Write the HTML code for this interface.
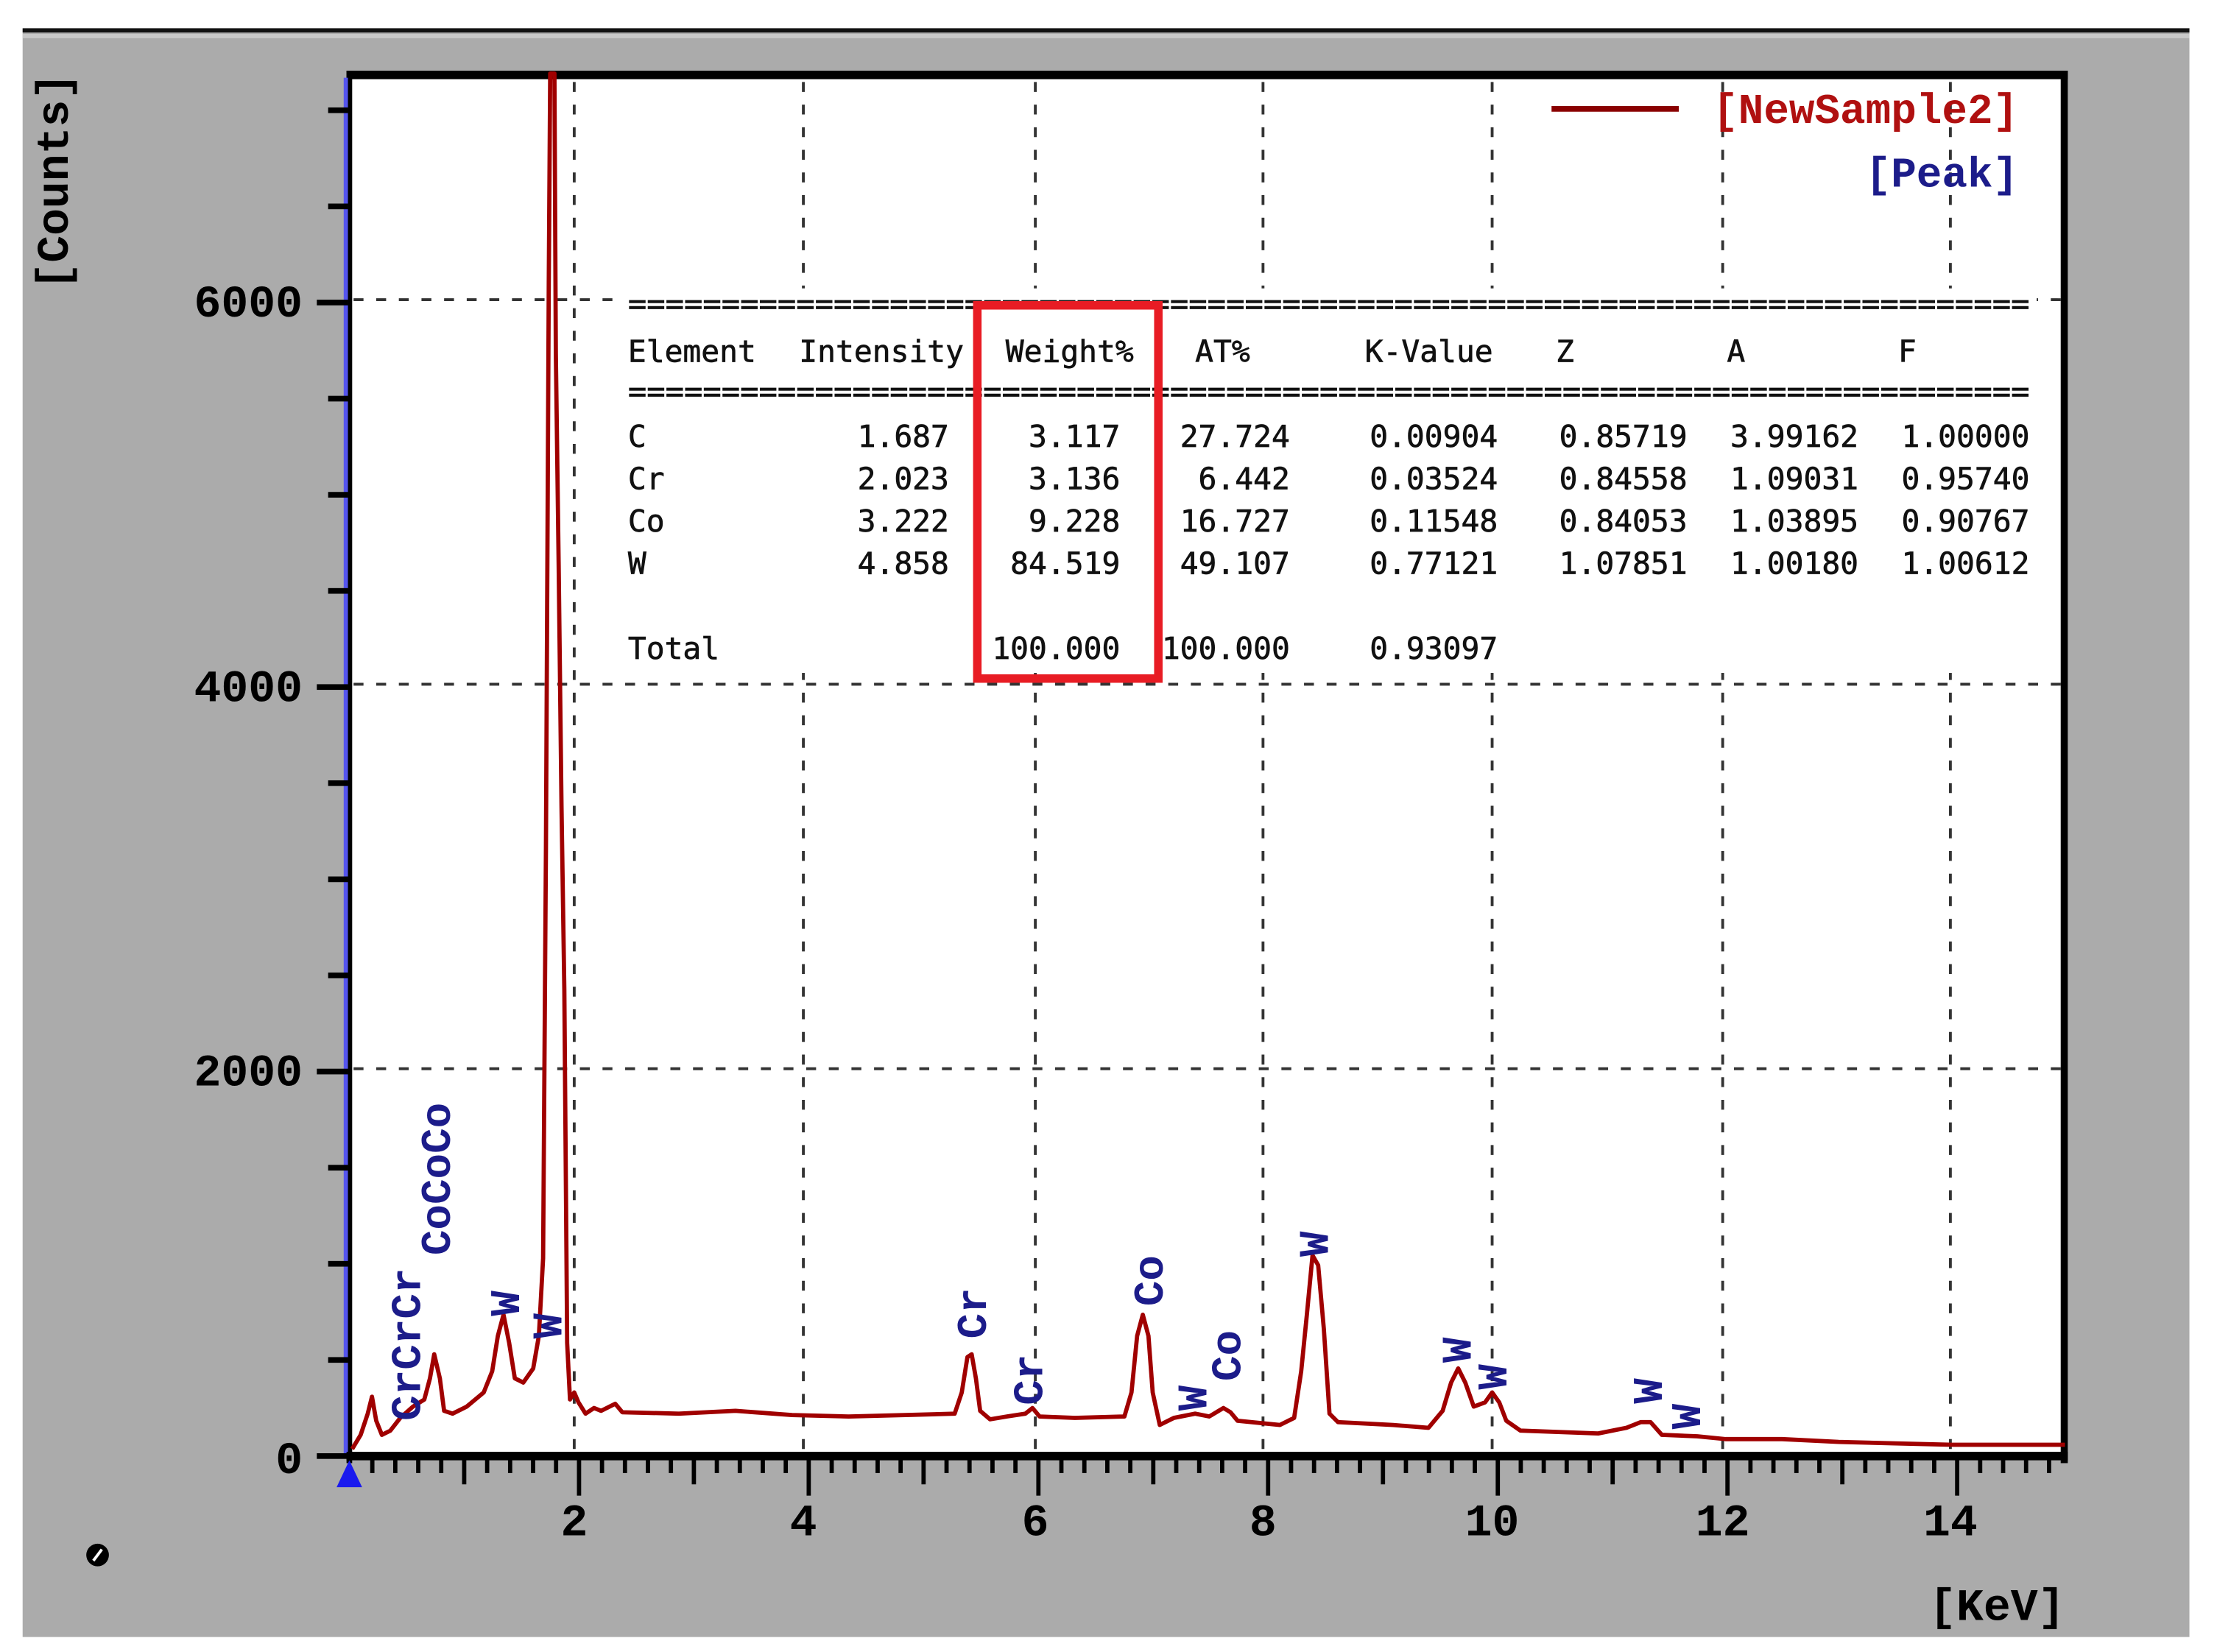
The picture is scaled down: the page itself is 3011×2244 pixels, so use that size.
<!DOCTYPE html>
<html><head><meta charset="utf-8"><style>
html,body{margin:0;padding:0;background:#fff;width:3011px;height:2244px;overflow:hidden}
svg{display:block}
.mono{font-family:"Liberation Mono","DejaVu Sans Mono",monospace}
.tb{font-family:"DejaVu Sans Mono","Liberation Mono",monospace;font-size:21.5px;fill:#111;stroke:#111;stroke-width:0.35}
.pk{font-family:"Liberation Mono",monospace;font-weight:bold;font-size:30px;fill:#1c1c8a}
.ax{font-family:"Liberation Mono",monospace;font-weight:bold;font-size:32px;fill:#000}
</style></head><body>
<svg width="3011" height="2244" viewBox="0 0 1567.5 1168.6" preserveAspectRatio="none" xmlns="http://www.w3.org/2000/svg">
<rect x="0" y="0" width="1570" height="1170" fill="#fff"/>
<rect x="16" y="20" width="1532" height="1138" fill="#ababab"/>
<rect x="16" y="20" width="1532" height="3" fill="#111"/>
<rect x="16" y="24" width="1532" height="3" fill="#c8c8c8"/>
<rect x="247" y="52" width="1213" height="978" fill="#fff"/>
<g stroke="#333" stroke-width="2" stroke-dasharray="7,9">
<line x1="406" y1="58" x2="406" y2="1030"/><line x1="568" y1="58" x2="568" y2="1030"/>
<line x1="732" y1="58" x2="732" y2="1030"/><line x1="893" y1="58" x2="893" y2="1030"/>
<line x1="1055" y1="58" x2="1055" y2="1030"/><line x1="1218" y1="58" x2="1218" y2="1030"/>
<line x1="1379" y1="58" x2="1379" y2="1030"/>
<line x1="250" y1="212" x2="1460" y2="212"/><line x1="250" y1="484" x2="1460" y2="484"/>
<line x1="250" y1="756" x2="1460" y2="756"/>
</g>
<rect x="440" y="204" width="1000" height="272" fill="#fff"/>
<rect x="245" y="50" width="1217" height="6" fill="#000"/>
<rect x="1457" y="50" width="5" height="985" fill="#000"/>
<rect x="245" y="50" width="4" height="985" fill="#000"/>
<rect x="243" y="55" width="3" height="975" fill="#5555ee"/>
<rect x="245" y="1027" width="1217" height="6" fill="#000"/>
<g fill="#000" id="yt"></g>
<g fill="#000" id="xt"></g>
<g class="tb">
<text x="444" y="222" textLength="991" lengthAdjust="spacingAndGlyphs">===========================================================================</text>
<text x="444" y="284" textLength="991" lengthAdjust="spacingAndGlyphs">===========================================================================</text>
<text x="444" y="256">Element</text>
<text x="565" y="256">Intensity</text>
<text x="711" y="256">Weight%</text>
<text x="845" y="256">AT%</text>
<text x="965" y="256">K-Value</text>
<text x="1100" y="256">Z</text>
<text x="1221" y="256">A</text>
<text x="1342" y="256">F</text>
<g text-anchor="start"><text x="444" y="316">C</text><text x="444" y="346">Cr</text><text x="444" y="376">Co</text><text x="444" y="406">W</text><text x="444" y="466">Total</text></g>
<g text-anchor="end">
<text x="671" y="316">1.687</text><text x="671" y="346">2.023</text><text x="671" y="376">3.222</text><text x="671" y="406">4.858</text>
<text x="792" y="316">3.117</text><text x="792" y="346">3.136</text><text x="792" y="376">9.228</text><text x="792" y="406">84.519</text><text x="792" y="466">100.000</text>
<text x="912" y="316">27.724</text><text x="912" y="346">6.442</text><text x="912" y="376">16.727</text><text x="912" y="406">49.107</text><text x="912" y="466">100.000</text>
<text x="1059" y="316">0.00904</text><text x="1059" y="346">0.03524</text><text x="1059" y="376">0.11548</text><text x="1059" y="406">0.77121</text><text x="1059" y="466">0.93097</text>
<text x="1193" y="316">0.85719</text><text x="1193" y="346">0.84558</text><text x="1193" y="376">0.84053</text><text x="1193" y="406">1.07851</text>
<text x="1314" y="316">3.99162</text><text x="1314" y="346">1.09031</text><text x="1314" y="376">1.03895</text><text x="1314" y="406">1.00180</text>
<text x="1435" y="316">1.00000</text><text x="1435" y="346">0.95740</text><text x="1435" y="376">0.90767</text><text x="1435" y="406">1.00612</text>
</g></g>
<rect x="691" y="216" width="128" height="264" fill="none" stroke="#e81c24" stroke-width="6"/>
<polyline fill="none" stroke="#a00000" stroke-width="3" stroke-linejoin="round" points="
249,1025 255,1015 260,1000 263,988 266,1005 270,1015 276,1012 283,1003 292,995 300,990 304,975 307,958 311,975 314,998 320,1000 330,995 342,985 348,970 352,945 356,930 360,950 364,975 370,978 377,968 381,945 384,890 386,600 388,200 389,52 392,52 393,250 395,400 397,570 399,700 401,950 403,990 406,985 409,992 414,1000 420,996 425,998 435,993 440,999 480,1000 520,998 560,1001 600,1002 640,1001 675,1000 680,985 684,960 687,958 690,975 693,998 700,1004 712,1002 725,1000 730,996 735,1002 760,1003 795,1002 800,985 804,945 808,930 812,945 815,985 820,1008 830,1003 845,1000 855,1002 865,996 870,999 875,1005 905,1008 915,1003 920,970 924,930 928,888 932,895 936,940 940,1000 946,1006 985,1008 1010,1010 1020,998 1026,978 1031,968 1036,978 1042,995 1050,992 1055,985 1060,992 1065,1005 1075,1012 1130,1014 1150,1010 1160,1006 1167,1006 1175,1015 1200,1016 1220,1018 1260,1018 1300,1020 1340,1021 1380,1022 1460,1022"/>
<g class="pk">
<text transform="translate(297,1005) rotate(-90)">CrCrCr</text>
<text transform="translate(318,888) rotate(-90)">CoCoCo</text>
<text transform="translate(367,931) rotate(-90)">W</text>
<text transform="translate(397,947) rotate(-90)">W</text>
<text transform="translate(697,947) rotate(-90)">Cr</text>
<text transform="translate(737,994) rotate(-90)">Cr</text>
<text transform="translate(822,924) rotate(-90)">Co</text>
<text transform="translate(853,998) rotate(-90)">W</text>
<text transform="translate(877,977) rotate(-90)">Co</text>
<text transform="translate(939,889) rotate(-90)">W</text>
<text transform="translate(1040,964) rotate(-90)">W</text>
<text transform="translate(1065,983) rotate(-90)">W</text>
<text transform="translate(1175,993) rotate(-90)">W</text>
<text transform="translate(1202,1011) rotate(-90)">W</text>
</g>
<line x1="1097" y1="77" x2="1187" y2="77" stroke="#8a0000" stroke-width="4"/>
<text x="1427" y="87" text-anchor="end" class="mono" font-weight="bold" font-size="30" fill="#b01010">[NewSample2]</text>
<text x="1427" y="132" text-anchor="end" class="mono" font-weight="bold" font-size="30" fill="#1c1c8a">[Peak]</text>
<text class="ax" x="214" y="224" text-anchor="end">6000</text>
<text class="ax" x="214" y="496" text-anchor="end">4000</text>
<text class="ax" x="214" y="768" text-anchor="end">2000</text>
<text class="ax" x="214" y="1042" text-anchor="end">0</text>
<g class="ax" text-anchor="middle">
<text x="406" y="1086">2</text><text x="568" y="1086">4</text><text x="732" y="1086">6</text><text x="893" y="1086">8</text>
<text x="1055" y="1086">10</text><text x="1218" y="1086">12</text><text x="1379" y="1086">14</text>
</g>
<text class="ax" x="1460" y="1146" text-anchor="end" font-size="30">[KeV]</text>
<text class="ax" transform="translate(48,205) rotate(-90)" font-size="31">[Counts]</text>
<polygon points="247,1033 238,1052 256,1052" fill="#1a1aee"/>
<circle cx="69" cy="1100" r="8" fill="#000"/>
<line x1="66" y1="1104" x2="72" y2="1096" stroke="#fff" stroke-width="2"/>
</svg>
<script>
(function(){
var ns="http://www.w3.org/2000/svg";
var yt=document.getElementById("yt"),xt=document.getElementById("xt");
function r(g,x,y,w,h){var e=document.createElementNS(ns,"rect");e.setAttribute("x",x);e.setAttribute("y",y);e.setAttribute("width",w);e.setAttribute("height",h);g.appendChild(e);}
for(var c=0;c<=7000;c+=500){var y=1030-0.136*c;if(y<58)break;var maj=(c%2000==0);r(yt,maj?224:232,y-2,maj?22:14,4);}
for(var i=1;i<=75;i++){var e=i*0.2;var x=247+81.2*e;if(x>1462)break;var len=(i%10==0)?28:((i%5==0)?20:12);r(xt,x-1.5,1030,3,len);}
})();
</script>
</body></html>
